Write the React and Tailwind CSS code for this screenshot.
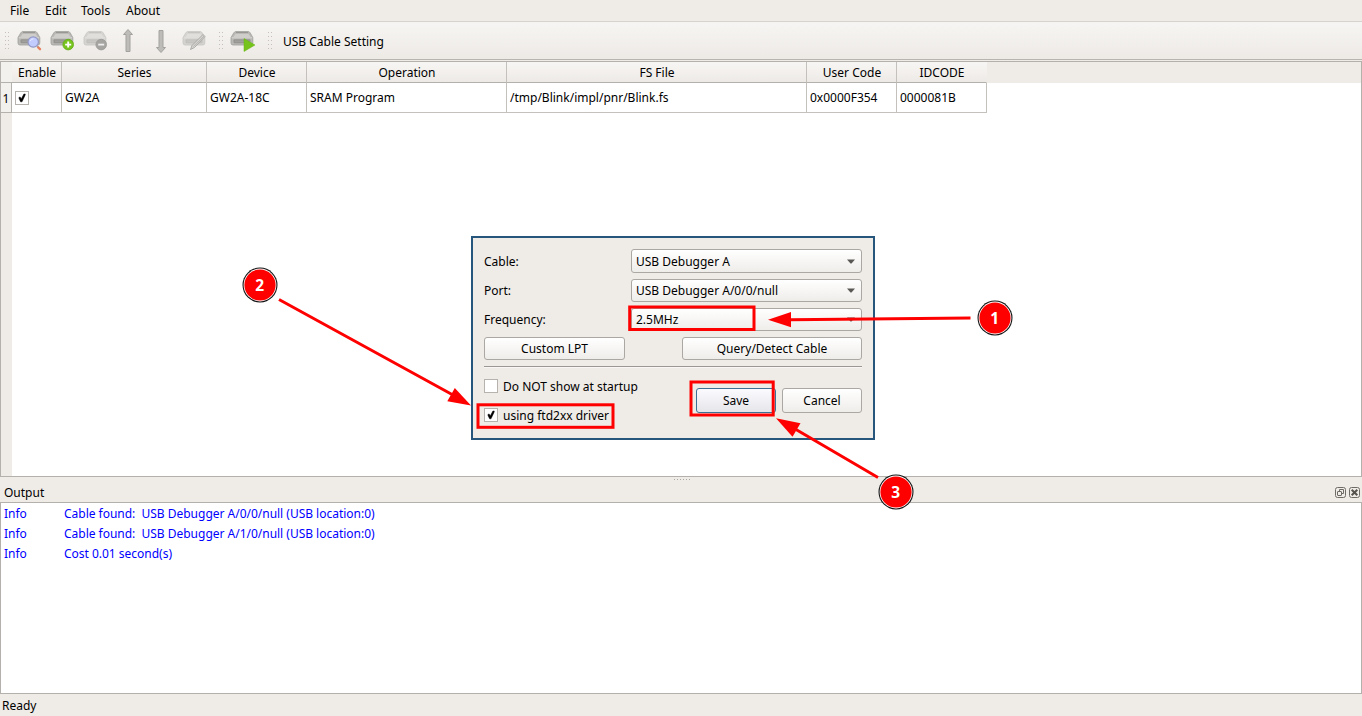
import React from "react";

function Drive({ faded, children }) {
  return (
    <svg width="26" height="26" viewBox="0 0 26 26" className="block">
      <g opacity={faded ? 0.5 : 1}>
        <path d="M6 3.5 H18 Q19.5 3.5 20.3 5 L22.8 9.5 V15 Q22.8 17 20.8 17 H3 Q1 17 1 15 V9.5 L3.7 5 Q4.5 3.5 6 3.5 Z" fill="#bab9b6" stroke="#a09f9c" strokeWidth="0.8" />
        <path d="M6 4.5 H18" stroke="#989794" />
        <path d="M5.5 6 H18.5 L20.5 9 H3.5 Z" fill="#cfcecb" />
        <path d="M1.8 9.8 H22" stroke="#d9d8d5" strokeWidth="1" />
        <rect x="3.5" y="11.2" width="17" height="4" rx="1" fill="#969592" />
        <path d="M5 13.2 H18" stroke="#aaa9a6" strokeWidth="0.8" />
      </g>
      {children}
    </svg>
  );
}

function Arrow({ down }) {
  return (
    <svg width="14" height="26" viewBox="0 0 14 26" className="block">
      <path
        d="M7 1.5 L11.5 6.5 H9 V23.5 H5 V6.5 H2.5 Z"
        transform={down ? "rotate(180 7 13)" : undefined}
        fill="#bdbcb9"
        stroke="#a3a29f"
        strokeLinejoin="round"
      />
    </svg>
  );
}

function Grip() {
  return (
    <svg width="5" height="17" viewBox="0 0 5 17" className="block" shapeRendering="crispEdges">
      {[0, 2, 4, 6, 8].map((r) => (
        <g key={r} fill="#c4c0bb">
          <rect x="0" y={r * 2} width="1" height="1" />
          <rect x="3" y={r * 2} width="1" height="1" />
        </g>
      ))}
    </svg>
  );
}

function CheckBox({ checked }) {
  return (
    <span className="block size-[14px] shrink-0 border border-[#b6b2ae] bg-white">
      {checked && (
        <svg width="12" height="12" viewBox="0 0 12 12" className="block">
          <path d="M3 5.2 L4.4 5.2 L5.2 7 L7.9 2 L9.3 2 L9 3.4 L6 9.8 L4.6 9.8 L3 6.6 Z" fill="#000" stroke="#000" strokeWidth="0.5" />
        </svg>
      )}
    </span>
  );
}

function Combo({ children, className = "" }) {
  return (
    <div className={"flex w-[231px] items-center justify-between rounded-[3px] border border-[#aba7a3] bg-gradient-to-b from-white to-[#efedea] pr-[6px] pl-1 " + className}>
      <span>{children}</span>
      <svg width="8" height="5" viewBox="0 0 8 5" className="block">
        <path d="M0 0.5 H8 L4.5 4.5 H3.5 Z" fill="#5a5855" />
      </svg>
    </div>
  );
}

function Button({ children, className }) {
  return (
    <button className={"flex items-center justify-center rounded-[3px] border bg-gradient-to-b " + className}>
      {children}
    </button>
  );
}

const plain = "border-[#aba7a3] from-white to-[#efedea] ";

const columns = [
  ["Enable", "w-[50px]", ""],
  ["Series", "w-[145px]", "GW2A"],
  ["Device", "w-[100px]", "GW2A-18C"],
  ["Operation", "w-[200px]", "SRAM Program"],
  ["FS File", "w-[300px]", "/tmp/Blink/impl/pnr/Blink.fs"],
  ["User Code", "w-[90px]", "0x0000F354"],
  ["IDCODE", "w-[90px]", "0000081B"],
];

const log = [
  "Cable found:  USB Debugger A/0/0/null (USB location:0)",
  "Cable found:  USB Debugger A/1/0/null (USB location:0)",
  "Cost 0.01 second(s)",
];

function Toolbar() {
  return (
    <div className="flex h-[39px] items-center border-y border-t-[#d6d2ce] border-b-[#b7b3ae] bg-gradient-to-b from-[#f7f5f3] to-[#edeae6]">
      <div className="ml-[5px]"><Grip /></div>
      <div className="ml-[7px]">
        <Drive>
          <circle cx="16.2" cy="14" r="5.2" fill="#c3ccff" stroke="#9298c4" strokeWidth="1.2" />
          <path d="M13.2 13 A3.5 3.5 0 0 1 16.5 10.8" stroke="#e8edff" fill="none" />
          <path d="M20 18 L21.5 19.5" stroke="#a8a8a8" strokeWidth="2" />
          <path d="M21.3 19.5 L23 21.2" stroke="#e7805f" strokeWidth="2.4" strokeLinecap="round" />
        </Drive>
      </div>
      <div className="ml-[7px]">
        <Drive>
          <circle cx="18.2" cy="16.6" r="5.3" fill="#78c41f" stroke="#62ab14" strokeWidth="0.8" />
          <path d="M18.2 13.6 V19.6 M15.2 16.6 H21.2" stroke="#fff" strokeWidth="1.9" />
        </Drive>
      </div>
      <div className="ml-[7px]">
        <Drive faded>
          <circle cx="18.2" cy="16.6" r="5.3" fill="#a5a4a1" stroke="#989794" strokeWidth="0.8" />
          <path d="M15.2 16.6 H21.2" stroke="#eee" strokeWidth="1.8" />
        </Drive>
      </div>
      <div className="ml-[12px]"><Arrow /></div>
      <div className="ml-[19px]"><Arrow down /></div>
      <div className="ml-[14px]">
        <Drive faded>
          <path d="M8.5 21.5 L10 17.5 L21 6.5 L23 8.5 L12.5 19.5 Z" fill="#d5d4d1" stroke="#a6a5a2" strokeWidth="0.9" strokeLinejoin="round" />
          <path d="M11.5 18.5 L22 8" stroke="#b2b1ae" strokeWidth="0.8" />
        </Drive>
      </div>
      <div className="ml-[11px]"><Grip /></div>
      <div className="ml-[6px]">
        <Drive>
          <path d="M14 10.5 L25 17 L14 23.5 Z" fill="#76c31c" stroke="#68b114" strokeWidth="0.5" />
        </Drive>
      </div>
      <div className="ml-[12px]"><Grip /></div>
      <div className="ml-[10px] pt-[2px]">USB Cable Setting</div>
    </div>
  );
}

function DeviceTable() {
  return (
    <div className="flex h-[416px] flex-col border border-[#b4b0ab] bg-white">
      <div className="flex h-[21px] shrink-0 bg-[#efebe7]">
        <div className="w-[11px] border-b border-[#b4b0ab] bg-[#f3f1ee]" />
        {columns.map(([name, w]) => (
          <div key={name} className={"flex items-center justify-center border-r border-b border-r-[#c4c0bc] border-b-[#b4b0ab] bg-gradient-to-b from-[#f8f6f4] to-[#edeae6] pt-[2px] pl-px last:border-r-transparent " + w}>
            <span>{name}</span>
          </div>
        ))}
      </div>
      <div className="flex h-[30px] shrink-0">
        <div className="flex w-[11px] items-center justify-center border-r border-b border-[#b4b0ab] bg-[#f3f1ee] pt-[2px]">1</div>
        {columns.map(([name, w, value]) => (
          <div key={name} className={"flex items-center border-r border-b border-[#c4c0bc] pl-[3px] " + w}>
            {value ? <span>{value}</span> : <CheckBox checked />}
          </div>
        ))}
      </div>
      <div className="w-[11px] grow bg-[#efebe7]" />
    </div>
  );
}

function CableDialog() {
  return (
    <div className="absolute top-[236px] left-[471px] flex h-[204px] w-[404px] flex-col border-2 border-[#26567c] bg-[#efebe7] px-[11px] pt-[11px]">
      <div className="flex h-6 items-center justify-between">
        <span className="pt-[2px]">Cable:</span>
        <Combo className="h-6 pt-px">USB Debugger A</Combo>
      </div>
      <div className="mt-[6px] flex h-[23px] items-center justify-between">
        <span>Port:</span>
        <Combo className="h-[23px]">USB Debugger A/0/0/null</Combo>
      </div>
      <div className="mt-[6px] flex h-[23px] items-center justify-between">
        <span>Frequency:</span>
        <Combo className="h-[23px]">2.5MHz</Combo>
      </div>
      <div className="mt-[6px] flex justify-between">
        <Button className={plain + "h-[23px] w-[141px]"}>Custom LPT</Button>
        <Button className={plain + "h-[23px] w-[180px]"}>Query/Detect Cable</Button>
      </div>
      <div className="mt-[6px] h-[2px] shrink-0 border-t border-b border-t-[#9b9894] border-b-[#f8f7f5]" />
      <div className="mt-[11px] flex justify-between">
        <div className="flex flex-col gap-[15px]">
          <label className="flex h-[14px] items-center gap-[5px]"><CheckBox /><span className="pt-[2px]">Do NOT show at startup</span></label>
          <label className="flex h-[14px] items-center gap-[5px]"><CheckBox checked /><span className="pt-[2px]">using ftd2xx driver</span></label>
        </div>
        <div className="flex gap-[6px] pt-[9px]">
          <Button className="h-[25px] w-[80px] border-[#3c7095] from-[#fafaff] to-[#e6e6ea]">Save</Button>
          <Button className={plain + "h-[25px] w-[80px]"}>Cancel</Button>
        </div>
      </div>
    </div>
  );
}

function Annotations() {
  return (
    <svg width="1362" height="716" viewBox="0 0 1362 716" className="pointer-events-none absolute top-0 left-0">
      <g fill="none" stroke="#ff0000" strokeWidth="3">
        <rect x="629.7" y="307" width="124.3" height="22.5" />
        <rect x="478" y="404.8" width="135" height="22.5" />
        <rect x="691" y="382" width="82.2" height="33" />
        <path d="M970.5 318 L790 319.8 M279 299.5 L453 395 M878 477.5 L796 429.5" />
      </g>
      <g fill="#ff0000">
        <path d="M768 319.8 L791 312 V327.2 Z" />
        <path d="M471 405.5 L454.8 388 L447.3 401.3 Z" />
        <path d="M776 418.3 L800.5 423.3 L792.5 436.8 Z" />
      </g>
      {[[995, 318, 1], [260, 285, 2], [896, 492, 3]].map(([x, y, n]) => (
        <g key={n}>
          <circle cx={x} cy={y} r="17.5" fill="#111" />
          <circle cx={x} cy={y} r="16.4" fill="#fff" />
          <circle cx={x} cy={y} r="15.6" fill="#ff0000" />
          <text x={x - 0.3} y={y + 5.7} textAnchor="middle" fill="#fff" fontSize="15.5" fontWeight="700">{n}</text>
        </g>
      ))}
    </svg>
  );
}

export default function App() {
  return (
    <div className="relative flex h-[716px] w-[1362px] flex-col overflow-hidden bg-[#efebe7] font-['Noto_Sans',sans-serif] text-[12px] leading-4 text-black">
      <div className="flex h-[21px] items-center pl-[10px]">
        <span className="w-[35px]">File</span>
        <span className="w-[36px]">Edit</span>
        <span className="w-[45px]">Tools</span>
        <span>About</span>
      </div>
      <Toolbar />
      <div className="h-px shrink-0" />
      <DeviceTable />
      <div className="flex h-[25px] shrink-0 flex-col">
        <svg width="17" height="1" viewBox="0 0 17 1" className="mt-[2px] ml-[674px] block shrink-0" shapeRendering="crispEdges">
          {[0, 3, 6, 9, 12, 15].map((x) => <rect key={x} x={x} y="0" width="1" height="1" fill="#aaa6a2" />)}
        </svg>
        <div className="flex items-start justify-between pt-[5px] pr-[2px] pl-1">
          <span>Output</span>
          <div className="flex gap-[3px] pt-[2px]">
            <svg width="11" height="11" viewBox="0 0 11 11" fill="none" stroke="#6e6b67">
              <rect x="0.5" y="0.5" width="10" height="10" rx="2" />
              <rect x="2.5" y="4.5" width="4" height="4" rx="0.5" />
              <path d="M4.5 4.5 V2.5 H8.5 V6.5 H6.5" />
            </svg>
            <svg width="11" height="11" viewBox="0 0 11 11" fill="none" stroke="#6e6b67">
              <rect x="0.5" y="0.5" width="10" height="10" rx="2" />
              <path d="M2.7 2.7 L8.3 8.3 M8.3 2.7 L2.7 8.3" stroke="#55524e" strokeWidth="2" />
            </svg>
          </div>
        </div>
      </div>
      <div className="h-[192px] shrink-0 border border-[#b4b0ab] bg-white pt-px text-[#0000ff]">
        {log.map((line) => (
          <div key={line} className="flex h-5 items-center pl-[3px]">
            <span className="w-[60px]">Info</span>
            <span className="tracking-[-0.015px] whitespace-pre">{line}</span>
          </div>
        ))}
      </div>
      <div className="flex h-[22px] items-center pt-px pl-[2px]">Ready</div>
      <CableDialog />
      <Annotations />
    </div>
  );
}
